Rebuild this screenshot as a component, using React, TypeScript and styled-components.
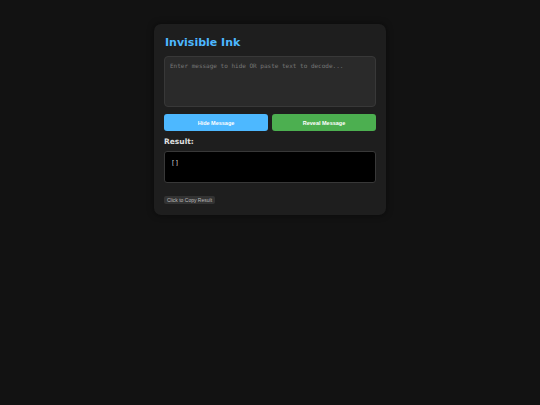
import React, { useState } from 'react';
import styled, { createGlobalStyle } from 'styled-components';

const GlobalStyle = createGlobalStyle`
  body {
    margin: 0;
    background: #121212;
    font-family: "DejaVu Sans", Verdana, sans-serif;
    color: #e0e0e0;
  }
`;

const Page = styled.div`
  display: flex;
  justify-content: center;
  align-items: flex-start;
  padding-top: 24px;
  min-height: 405px;
  box-sizing: border-box;
`;

const Card = styled.div`
  width: 232px;
  box-sizing: border-box;
  background: #1e1e1e;
  border-radius: 7px;
  padding: 12px 10px 11px 10px;
  box-shadow: 0 0 6px rgba(0, 0, 0, 0.5);
`;

const Title = styled.h1`
  margin: 0 0 6px 1px;
  font-size: 11px;
  line-height: 14px;
  font-weight: bold;
  color: #4db8ff;
`;

const Input = styled.textarea`
  display: block;
  width: 100%;
  height: 51px;
  box-sizing: border-box;
  resize: none;
  background: #2a2a2a;
  border: 1px solid #383838;
  border-radius: 4px;
  color: #e0e0e0;
  font-family: "DejaVu Sans Mono", monospace;
  font-size: 6px;
  padding: 5px 5px;
  outline: none;

  &::placeholder {
    color: #777;
  }
`;

const ButtonRow = styled.div`
  display: flex;
  gap: 4px;
  margin-top: 7px;
`;

const ActionButton = styled.button<{ $tone: 'blue' | 'green' }>`
  flex: 1;
  height: 17px;
  border: none;
  border-radius: 3px;
  background: ${(p) => (p.$tone === 'blue' ? '#4db8ff' : '#4caf50')};
  color: #fff;
  font-family: "Liberation Sans", Arial, sans-serif;
  font-size: 5.5px;
  font-weight: bold;
  cursor: pointer;
`;

const Label = styled.div`
  margin-top: 6px;
  font-size: 7.5px;
  line-height: 10px;
  font-weight: bold;
  color: #e0e0e0;
`;

const ResultBox = styled.div`
  margin-top: 4px;
  height: 32px;
  box-sizing: border-box;
  background: #000;
  border: 1px solid #383838;
  border-radius: 3px;
  padding: 7px 6px;
  font-family: "DejaVu Sans Mono", monospace;
  font-size: 6.5px;
  color: #dddddd;
`;

const CopyButton = styled.button`
  display: block;
  margin-top: 13px;
  height: 8px;
  padding: 0 3px;
  border: none;
  border-radius: 2px;
  background: #333;
  color: #bbb;
  font-family: "Liberation Sans", Arial, sans-serif;
  font-size: 5px;
  line-height: 8px;
  cursor: pointer;
`;

export default function App() {
  const [text, setText] = useState('');

  return (
    <>
      <GlobalStyle />
      <Page>
        <Card>
          <Title>Invisible Ink</Title>
          <Input
            value={text}
            onChange={(e) => setText(e.target.value)}
            placeholder="Enter message to hide OR paste text to decode..."
          />
          <ButtonRow>
            <ActionButton $tone="blue">Hide Message</ActionButton>
            <ActionButton $tone="green">Reveal Message</ActionButton>
          </ButtonRow>
          <Label>Result:</Label>
          <ResultBox>[]</ResultBox>
          <CopyButton>Click to Copy Result</CopyButton>
        </Card>
      </Page>
    </>
  );
}
